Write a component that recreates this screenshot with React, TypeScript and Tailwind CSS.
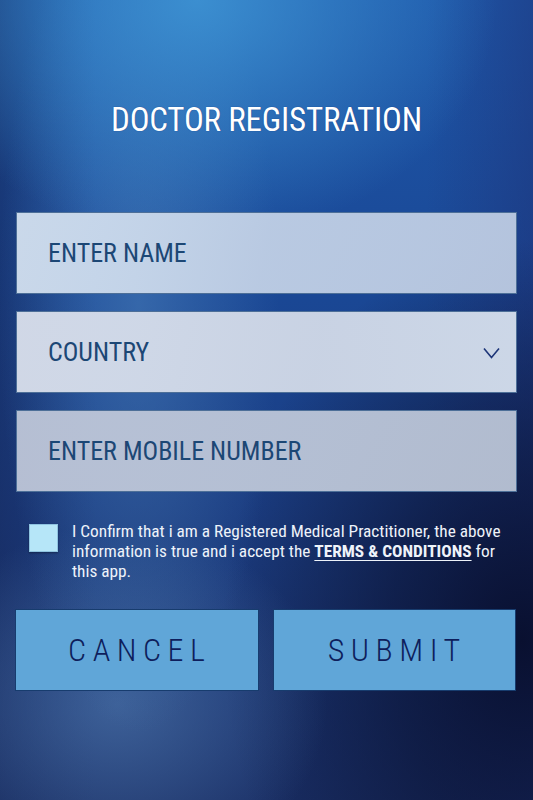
function Field({ label, tone, chevron }: { label: string; tone: string; chevron?: boolean }) {
  return (
    <div
      className={`h-[82px] border border-[#4d6f98] flex items-center justify-between pl-[31px] pr-[16px] ${tone}`}
    >
      <span className="text-[26px] leading-none tracking-[0px] text-[#1c4775]">{label}</span>
      {chevron && (
        <svg width="17" height="12" viewBox="0 0 17 12" fill="none" className="mt-[1px]">
          <path d="M1 1.5 L8.5 10.5 L16 1.5" stroke="#1d3578" strokeWidth="1.6" strokeLinejoin="miter" />
        </svg>
      )}
    </div>
  );
}

export default function App() {
  return (
    <div className="relative min-h-[800px] w-full overflow-hidden font-['Roboto_Condensed','Roboto',sans-serif] bg-[radial-gradient(ellipse_300px_240px_at_37%_0%,rgba(62,148,212,0.9),rgba(62,148,212,0)),radial-gradient(ellipse_140px_430px_at_26%_38%,rgba(80,135,192,0.5),rgba(80,135,192,0)),radial-gradient(ellipse_210px_180px_at_22%_88%,rgba(76,116,170,0.7),rgba(76,116,170,0)),radial-gradient(ellipse_300px_400px_at_98%_80%,rgba(9,16,48,1),rgba(9,16,48,0.6)_45%,rgba(9,16,48,0)),linear-gradient(to_right,rgba(22,40,90,0.55),rgba(22,40,90,0)_18%,rgba(22,40,90,0)_80%,rgba(30,50,120,0.5)),linear-gradient(to_bottom,#1e58aa_0%,#1a4896_35%,#1b3c80_65%,#1a2f66_100%)]">
      <h1 className="pt-[103px] text-center text-[33px] leading-none tracking-[-0.2px] text-white font-normal [text-shadow:0_0_1px_rgba(10,40,120,0.8)]">
        DOCTOR REGISTRATION
      </h1>

      <div className="mt-[76px] pl-[16px] pr-[16px] flex flex-col gap-[17px]">
        <Field label="ENTER NAME" tone="bg-[linear-gradient(100deg,rgba(215,228,242,0.93),rgba(198,212,232,0.92)_50%,rgba(192,206,228,0.93))]" />
        <Field label="COUNTRY" chevron tone="bg-[linear-gradient(100deg,rgba(218,224,236,0.95),rgba(210,218,232,0.95)_60%,rgba(214,224,238,0.95))]" />
        <Field label="ENTER MOBILE NUMBER" tone="bg-[linear-gradient(100deg,rgba(190,198,216,0.95),rgba(188,198,216,0.95)_60%,rgba(186,196,214,0.95))]" />
      </div>

      <div className="mt-[29px] pl-[29px] pr-[22px] flex items-start gap-[14px]">
        <div className="mt-[3px] w-[29px] h-[28px] shrink-0 bg-[#b6e6f8] border border-[#8ec3e0] shadow-[0_1px_2px_rgba(0,0,0,0.35)]" />
        <p className="text-[17.3px] leading-[20px] text-[#eef3fa]">
          I Confirm that i am a Registered Medical Practitioner, the above information is true and i accept the{' '}
          <span className="font-bold underline underline-offset-[3px] decoration-1">TERMS &amp; CONDITIONS</span> for this app.
        </p>
      </div>

      <div className="mt-[28px] pl-[15px] pr-[17px] flex gap-[14px]">
        <button className="flex-1 h-[82px] bg-[#60a6d8] border border-[#173c6e] flex items-center justify-center pl-[6px] text-[32px] font-light leading-none tracking-[6.5px] text-[#0e1e5c]">
          CANCEL
        </button>
        <button className="flex-1 h-[82px] bg-[#60a6d8] border border-[#173c6e] flex items-center justify-center pl-[6px] text-[32px] font-light leading-none tracking-[6.5px] text-[#0e1e5c]">
          SUBMIT
        </button>
      </div>
    </div>
  );
}
